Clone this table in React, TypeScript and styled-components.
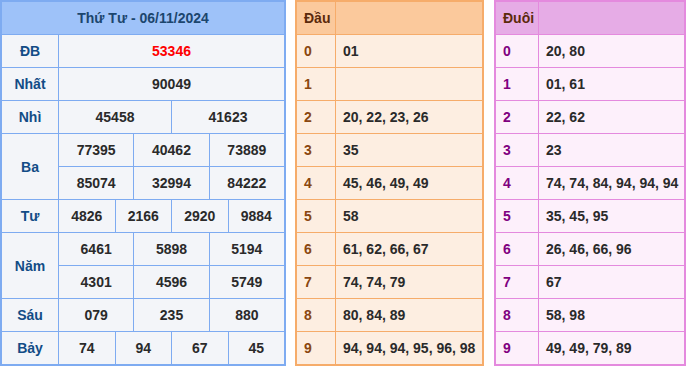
import React from "react";
import styled, { createGlobalStyle } from "styled-components";

const Global = createGlobalStyle`
  html, body { margin: 0; padding: 0; background: #ffffff; }
  body { font-family: "Liberation Sans", Arial, sans-serif; }
`;

const Page = styled.div`
  display: flex;
  align-items: flex-start;
  gap: 9px;
  width: 687px;
`;

const ResultGrid = styled.div`
  display: grid;
  flex: 0 0 286px;
  width: 286px;
  box-sizing: border-box;
  grid-template-columns: 56px repeat(12, 1fr);
  grid-auto-rows: 32px;
  gap: 1px;
  background: #7eabf1;
  border: 2px solid #7eabf1;
`;

const Cell = styled.div<{ $span?: number; $rows?: number }>`
  grid-column: span ${(p) => p.$span ?? 1};
  grid-row: span ${(p) => p.$rows ?? 1};
  background: #f3f5f9;
  display: flex;
  align-items: center;
  justify-content: center;
  font-size: 14px;
  font-weight: bold;
  color: #2a2a2a;
`;

const Title = styled(Cell)`
  grid-column: 1 / -1;
  background: #9ec2f9;
  color: #1c466e;
`;

const Label = styled(Cell)`
  color: #124c86;
`;

const Special = styled(Cell)`
  color: #ff0000;
`;

const LotoTable = styled.div<{ $w: number; $first: number; $border: string; $bg: string; $offset?: number }>`
  display: grid;
  flex: 0 0 ${(p) => p.$w}px;
  width: ${(p) => p.$w}px;
  margin-left: ${(p) => p.$offset ?? 0}px;
  box-sizing: border-box;
  grid-template-columns: ${(p) => p.$first}px 1fr;
  grid-auto-rows: 32px;
  gap: 1px;
  background: ${(p) => p.$border};
  border: 2px solid ${(p) => p.$border};
  --cell-bg: ${(p) => p.$bg};
`;

const LotoHead = styled.div<{ $bg: string }>`
  background: ${(p) => p.$bg};
  display: flex;
  align-items: center;
  padding-left: 7px;
  font-size: 14px;
  font-weight: bold;
  color: #5b2a0c;
`;

const LotoKey = styled.div<{ $color: string }>`
  background: var(--cell-bg);
  display: flex;
  align-items: center;
  padding-left: 7px;
  font-size: 14px;
  font-weight: bold;
  color: ${(p) => p.$color};
`;

const LotoVal = styled.div`
  background: var(--cell-bg);
  display: flex;
  align-items: center;
  padding-left: 7px;
  font-size: 14px;
  font-weight: bold;
  color: #2a2a2a;
  white-space: nowrap;
`;

const dau = ["01", "", "20, 22, 23, 26", "35", "45, 46, 49, 49", "58", "61, 62, 66, 67", "74, 74, 79", "80, 84, 89", "94, 94, 94, 95, 96, 98"];
const duoi = ["20, 80", "01, 61", "22, 62", "23", "74, 74, 84, 94, 94, 94", "35, 45, 95", "26, 46, 66, 96", "67", "58, 98", "49, 49, 79, 89"];

const prizes: { label: string; lines: string[][] }[] = [
  { label: "Nhất", lines: [["90049"]] },
  { label: "Nhì", lines: [["45458", "41623"]] },
  { label: "Ba", lines: [["77395", "40462", "73889"], ["85074", "32994", "84222"]] },
  { label: "Tư", lines: [["4826", "2166", "2920", "9884"]] },
  { label: "Năm", lines: [["6461", "5898", "5194"], ["4301", "4596", "5749"]] },
  { label: "Sáu", lines: [["079", "235", "880"]] },
  { label: "Bảy", lines: [["74", "94", "67", "45"]] },
];

export default function App() {
  return (
    <>
      <Global />
      <Page>
        <ResultGrid>
          <Title>Thứ Tư - 06/11/2024</Title>
          <Label>ĐB</Label>
          <Special $span={12}>53346</Special>
          {prizes.map((p) => (
            <React.Fragment key={p.label}>
              <Label $rows={p.lines.length}>{p.label}</Label>
              {p.lines.map((line, li) =>
                line.map((v, vi) => (
                  <Cell key={`${li}-${vi}`} $span={12 / line.length}>
                    {v}
                  </Cell>
                ))
              )}
            </React.Fragment>
          ))}
        </ResultGrid>
        <LotoTable $w={189} $first={38} $border="#f6ac6a" $bg="#fdeee1">
          <LotoHead $bg="#fbc99c">Đầu</LotoHead>
          <LotoHead $bg="#fbc99c" />
          {dau.map((v, i) => (
            <React.Fragment key={i}>
              <LotoKey $color="#8a4710">{i}</LotoKey>
              <LotoVal>{v}</LotoVal>
            </React.Fragment>
          ))}
        </LotoTable>
        <LotoTable $w={192} $first={42} $border="#e48ade" $bg="#fdf0fb" $offset={1}>
          <LotoHead $bg="#e6ace6">Đuôi</LotoHead>
          <LotoHead $bg="#e6ace6" />
          {duoi.map((v, i) => (
            <React.Fragment key={i}>
              <LotoKey $color="#800080">{i}</LotoKey>
              <LotoVal>{v}</LotoVal>
            </React.Fragment>
          ))}
        </LotoTable>
      </Page>
    </>
  );
}
